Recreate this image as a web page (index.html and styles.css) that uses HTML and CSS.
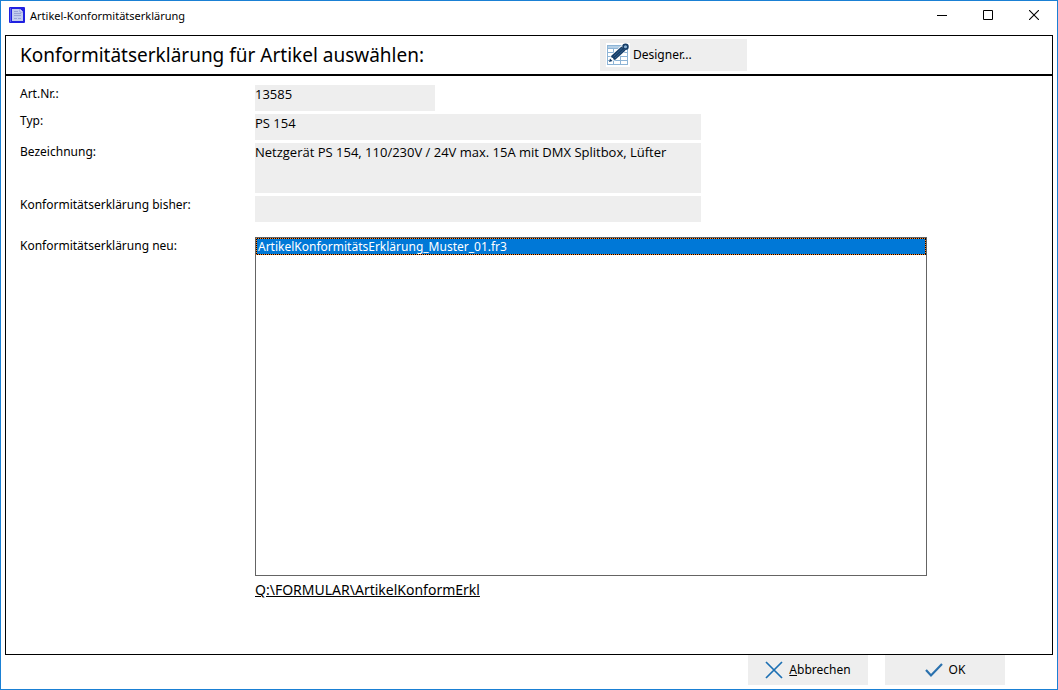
FILE: index.html
```html
<!DOCTYPE html>
<html lang="de">
<head>
<meta charset="utf-8">
<title>Artikel-Konformitätserklärung</title>
<link rel="stylesheet" href="styles.css">
</head>
<body>
<div class="window">
  <header class="titlebar">
    <svg class="app-icon" width="16" height="16" viewBox="0 0 16 16" aria-hidden="true">
      <rect width="16" height="16" rx="1" fill="#2020e0"/>
      <path d="M1.500 1v14" stroke="#5a5af0"/>
      <path d="M3 2h8l3 3v9H3z" fill="#c3cdee"/>
      <path d="M11 2v3h3" fill="#fff" stroke="#6a70cf" stroke-width=".6"/>
      <path d="M5 4.500h4M5 6.500h7M5 8.500h7M5 11.500h3M9 11.500h3" stroke="#9aa3d6"/>
    </svg>
    <span class="window-title">Artikel-Konformitätserklärung</span>
    <div class="window-controls">
      <button class="window-button" type="button" aria-label="Minimieren"><svg width="10" height="10" viewBox="0 0 10 10"><path d="M0 5.500h10" stroke="#000"/></svg></button>
      <button class="window-button" type="button" aria-label="Maximieren"><svg width="10" height="10" viewBox="0 0 10 10"><path d="M.5.5h9v9h-9z" fill="none" stroke="#000"/></svg></button>
      <button class="window-button" type="button" aria-label="Schließen"><svg width="10" height="10" viewBox="0 0 10 10"><path d="M0 0l10 10M10 0L0 10" stroke="#000" stroke-width="1.1"/></svg></button>
    </div>
  </header>
  <main class="panel">
    <div class="panel-header">
      <h1 class="heading">Konformitätserklärung für Artikel auswählen:</h1>
      <button class="button designer" type="button">
        <svg width="24" height="24" viewBox="0 0 24 24" aria-hidden="true">
          <path d="M0 0h24v24H0z" fill="#fff"/>
          <path d="M1 2h21v20H1z" fill="#8db4d6"/>
          <path d="M2 3h19v2H2z" fill="#b4cfe6"/>
          <path d="M2 6h5v3H2zM8 6h6v3H8zM15 6h6v3h-6zM2 10h5v3H2zM8 10h6v3H8zM15 10h6v3h-6zM2 14h5v3H2zM8 14h6v3H8zM15 14h6v3h-6zM2 18h5v3H2zM8 18h6v3H8zM15 18h6v3h-6z" fill="#fff"/>
          <path d="M3 19l2-7L16 2l5 5L10 17z" fill="#fff"/>
          <path d="M5 13L15.500 3.500l4 4L9 17q-2 0-2-2-2 0-2-2z" fill="#173e68"/>
          <path d="M3 19l1-3.500 2.500 2.500z" fill="#173e68"/>
          <path d="M7.500 13.500l9-8.500M9 15l9-8.500" stroke="#3f6f9e" stroke-width=".7"/>
          <circle cx="19.500" cy="3.800" r="2.400" fill="#8db4d6" stroke="#173e68" stroke-width="1.700"/>
        </svg>
        <span>Designer...</span>
      </button>
    </div>
    <form class="form">
      <label class="label" for="artnr">Art.Nr.:</label>
      <input class="field field-short" id="artnr" type="text" value="13585" readonly>
      <label class="label label-raised" for="typ">Typ:</label>
      <input class="field" id="typ" type="text" value="PS 154" readonly>
      <label class="label" for="bez">Bezeichnung:</label>
      <textarea class="field field-tall" id="bez" readonly>Netzgerät PS 154, 110/230V / 24V max. 15A mit DMX Splitbox, Lüfter</textarea>
      <label class="label" for="bisher">Konformitätserklärung bisher:</label>
      <input class="field" id="bisher" type="text" readonly>
      <label class="label label-list" for="neu">Konformitätserklärung neu:</label>
      <div class="list-group">
        <select class="list" id="neu" size="18">
          <option class="list-item" selected>ArtikelKonformitätsErklärung_Muster_01.fr3</option>
        </select>
        <a class="path-link" href="#">Q:\FORMULAR\ArtikelKonformErkl</a>
      </div>
    </form>
  </main>
  <footer class="actions">
    <button class="button action" type="button">
      <svg width="18" height="18" viewBox="0 0 18 18" aria-hidden="true"><path d="M1 1l16 16M17 1L1 17" stroke="#1b6fb3" stroke-width="1.700" fill="none"/></svg>
      <span><u>A</u>bbrechen</span>
    </button>
    <button class="button action" type="button">
      <svg width="18" height="18" viewBox="0 0 18 18" aria-hidden="true"><path d="M1 9l5 5.500L17 3" stroke="#2a71ae" stroke-width="2.200" fill="none"/></svg>
      <span>OK</span>
    </button>
  </footer>
</div>
</body>
</html>
```
FILE: styles.css
```css
* {
  box-sizing: border-box;
}

body {
  margin: 0;
  background: #fff;
  color: #000;
  font: 12px/18px "Noto Sans", "Open Sans", sans-serif;
}

button,
input,
textarea,
select {
  font: inherit;
  color: inherit;
  border: 0;
  border-radius: 0;
  margin: 0;
  padding: 0;
  outline: 0;
}

.window {
  display: flex;
  flex-direction: column;
  min-height: 100vh;
  padding: 0 4px 4px;
  border: 1px solid #1a80d4;
}

.titlebar {
  display: flex;
  align-items: center;
  height: 34px;
  padding: 0 0 6px 4px;
  gap: 5px;
}

.window-title {
  flex: 1;
  padding-top: 2px;
  font-size: 11px;
}

.window-controls {
  display: flex;
  margin-right: -4px;
}

.window-button {
  display: flex;
  align-items: center;
  justify-content: center;
  width: 46px;
  height: 28px;
  background: none;
}

.panel {
  flex: 1;
  display: flex;
  flex-direction: column;
  border: 1px solid #000;
}

.panel-header {
  display: grid;
  grid-template-columns: 580px 147px;
  align-items: center;
  height: 40px;
  padding-left: 14px;
  border-bottom: 2px solid #000;
}

.heading {
  margin: 0;
  font-size: 19px;
  font-weight: 400;
  line-height: 28px;
}

.button {
  display: flex;
  align-items: center;
  background: #eee;
}

.designer {
  height: 32px;
  padding-left: 6px;
  gap: 3px;
}

.form {
  display: grid;
  grid-template-columns: 235px minmax(0, 672px);
  align-items: start;
  row-gap: 3px;
  padding: 9px 14px;
}

.label {
  padding-top: 2px;
  line-height: 14px;
}

.label-raised {
  padding-top: 0;
}

.label-list {
  margin-top: 12px;
}

.field {
  width: 100%;
  max-width: 446px;
  height: 26px;
  padding-bottom: 8px;
  background: #eee;
  font-family: "Open Sans", "Noto Sans", sans-serif;
  font-size: 13px;
}

.field-short {
  max-width: 180px;
}

.field-tall {
  display: block;
  height: 50px;
  resize: none;
  overflow: hidden;
}

.list-group {
  display: flex;
  flex-direction: column;
  align-items: flex-start;
  gap: 4px;
  margin-top: 12px;
}

.list {
  width: 100%;
  height: 339px;
  border: 1px solid #646464;
  background: #fff;
  line-height: 16px;
  overflow: hidden;
}

.list-item {
  height: 17px;
  min-height: 0;
  padding: 0 2px 1px;
}

.list-item:checked {
  color: #fff;
  background:
    repeating-linear-gradient(90deg, #ff8728 0 1px, #000 1px 2px) top / 100% 1px no-repeat,
    repeating-linear-gradient(90deg, #ff8728 0 1px, #000 1px 2px) bottom / 100% 1px no-repeat,
    repeating-linear-gradient(#ff8728 0 1px, #000 1px 2px) left / 1px 100% no-repeat,
    repeating-linear-gradient(#ff8728 0 1px, #000 1px 2px) right / 1px 100% no-repeat,
    linear-gradient(#0078d7, #0078d7);
}

.path-link {
  color: #000;
  font-size: 14px;
  line-height: 20px;
}

.actions {
  display: flex;
  justify-content: flex-end;
  gap: 17px;
  padding-right: 48px;
}

.action {
  justify-content: center;
  width: 120px;
  height: 30px;
  gap: 6px;
}
```
